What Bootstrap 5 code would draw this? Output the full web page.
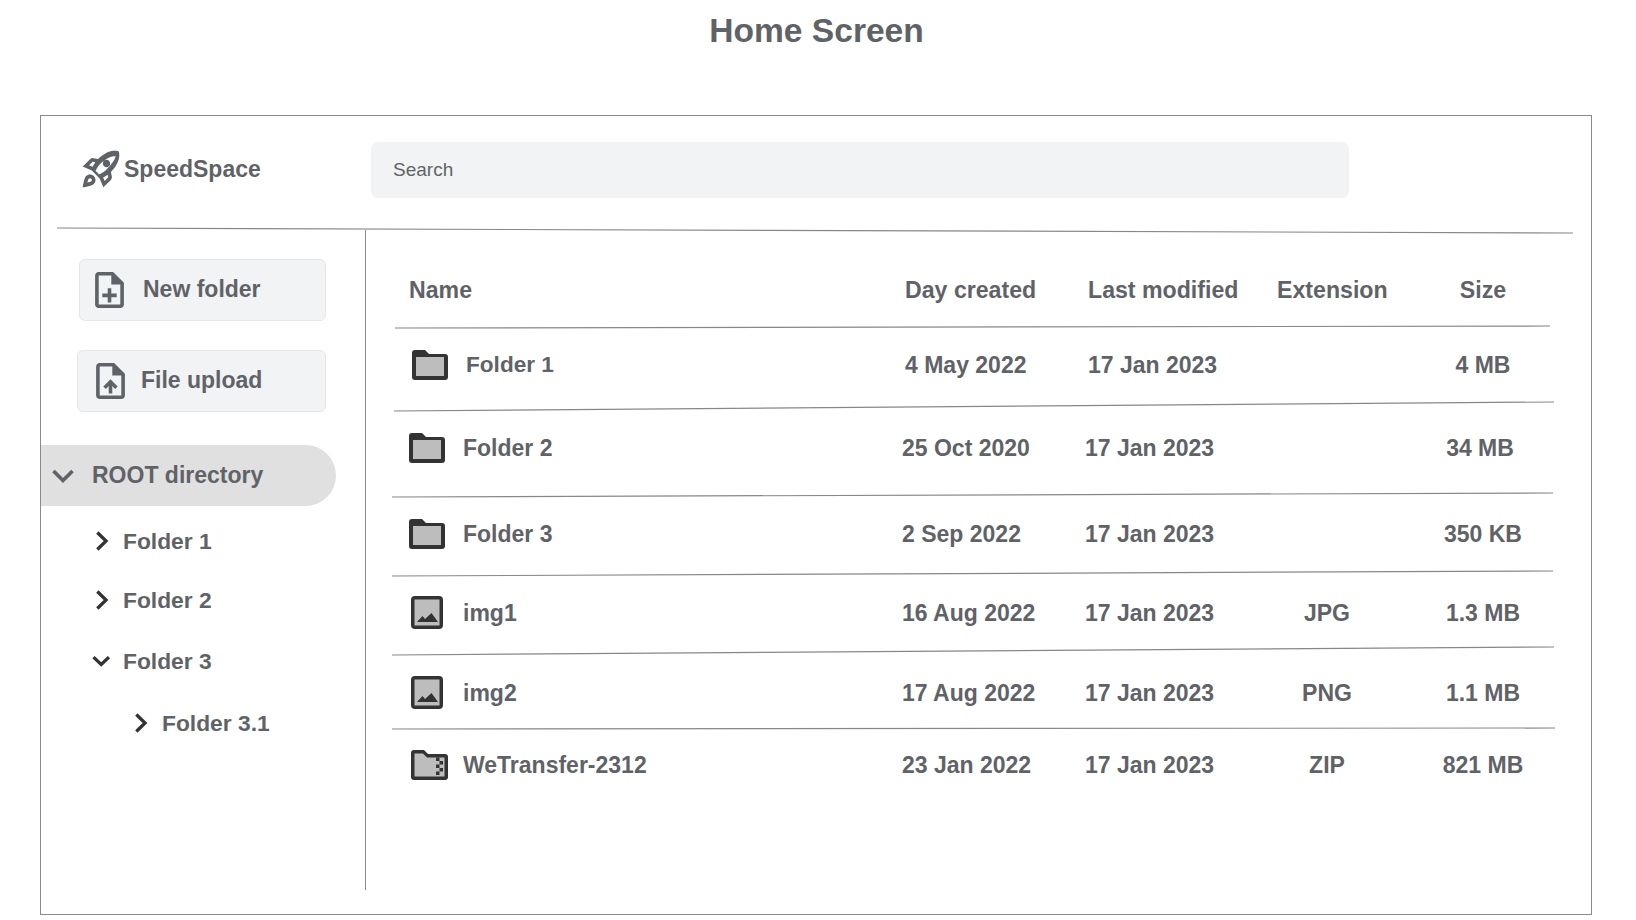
<!doctype html>
<html lang="en">
<head>
<meta charset="utf-8">
<title>Home Screen</title>
<link href="https://cdn.jsdelivr.net/npm/bootstrap@5.3.0/dist/css/bootstrap.min.css" rel="stylesheet">
<style>
body{margin:0;background:#fff;color:#5f6368;font-family:"Liberation Sans",Arial,sans-serif;font-weight:700;overflow:hidden}
svg{display:block;overflow:visible;flex:none}
.page-title{height:62px;line-height:62px;margin:0 0 53px;padding-right:3px;font-size:33.6px;font-weight:700;text-align:center;color:#5f6368}
.frame{width:1552px;height:800px;margin-left:40px;border:1px solid #8a8a8a}
.top-bar{height:110px;padding:0 0 2px 38px}
.brand{width:292px;font-size:23px;line-height:1}
.brand svg{margin:0 1px 2px 0}
.brand span{margin-bottom:2px}
.search-box{width:978px;height:56px;background:#f2f3f5;border:0;border-radius:7px;padding:0 22px;font-size:19px;font-weight:400;color:#5f6368}
.hline{stroke:#85878a;stroke-width:1.2}
.work{margin-top:-6px}
.side{width:325px;height:660px;border-right:1px solid #8a8a8a;padding-top:29px}
.act{height:62px;background:#f2f3f5;border:1px solid #e4e6e9;border-radius:6px;color:#5f6368;font-size:23px;font-weight:700;padding:0 0 2px}
.act:hover{background:#f2f3f5;color:#5f6368;border-color:#e4e6e9}
.act svg{margin-top:2px}
.act-new{width:247px;margin-left:38px;padding-left:15px;gap:19px}
.act-up{width:249px;margin-left:36px;margin-top:29px;padding-left:18px;gap:16px}
.root-row{width:295px;height:61px;margin-top:33px;margin-bottom:15px;padding-left:11px;background:#e0e0e0;border-radius:0 31px 31px 0;font-size:23px}
.root-row svg{margin-right:18px}
.tree-item{height:40px;margin-bottom:19px;padding-left:51px;font-size:22.8px}
.tree-item svg{width:31px}
.tree-second{margin-bottom:21px}
.tree-open{margin-bottom:22px}
.tree-item-deep{padding-left:90px}
.chev{fill:none;stroke:#333;stroke-width:3.4}
.chev-soft{fill:none;stroke:#5f6368;stroke-width:3.6}
.content{padding-top:40px}
.grid-row{display:grid;grid-template-columns:496px 183px 189px 104px 202px;height:40px;align-items:center;margin-left:43px;font-size:23px;white-space:nowrap}
.grid-head{font-size:23.15px}
.grid-shift{margin-left:40px}
.cell-c{text-align:center;padding-left:2px}
.cell-far{padding-left:8px}
.name-cell{display:flex;align-items:center}
.name-cell svg{margin:0 18px 0 3px}
.name-cell .pic-ic{margin-bottom:2px}
.name-narrow{font-size:22.6px}
.sep{margin-left:24px}
.ic-dark{fill:#333}
.ic-grey{fill:#bdbdbd}
.ic-file{fill:#5f6368}
</style>
</head>
<body>
<h1 class="page-title">Home Screen</h1>
<div class="frame">
  <div class="top-bar d-flex align-items-center">
    <div class="brand d-flex align-items-center">
      <svg width="44" height="44" viewBox="0 0 24 24" class="ic-file"><path d="M6,15c-0.83,0-1.58,0.34-2.12,0.88C2.7,17.06,2,22,2,22s4.94-0.7,6.12-1.88C8.66,19.58,9,18.83,9,18C9,16.34,7.66,15,6,15z M6.71,18.71c-0.28,0.28-2.17,0.76-2.17,0.76s0.47-1.88,0.76-2.17C5.47,17.11,5.72,17,6,17c0.55,0,1,0.45,1,1C7,18.28,6.89,18.53,6.71,18.71z M17.42,13.65L17.42,13.65c6.36-6.36,4.24-11.31,4.24-11.31s-4.95-2.12-11.31,4.24l-2.49-0.5C7.21,5.95,6.53,6.16,6.05,6.63L2,10.69l5,2.14L11.17,17l2.14,5l4.05-4.05c0.47-0.47,0.68-1.15,0.55-1.81L17.42,13.65z M7.41,10.83L5.5,10.01l1.97-1.97l1.44,0.29C8.34,9.16,7.83,10.03,7.41,10.83z M13.99,18.5l-0.82-1.91c0.8-0.42,1.67-0.93,2.49-1.5l0.29,1.44L13.99,18.5z M15,12.24c-1.32,1.32-3.38,2.4-4.02,2.72l-1.94-1.94c0.31-0.64,1.39-2.7,2.72-4.02c4.68-4.68,8.24-3.97,8.24-3.97S19.68,7.56,15,12.24z M15,11c1.1,0,2-0.9,2-2s-0.9-2-2-2s-2,0.9-2,2S13.9,11,15,11z"/></svg>
      <span>SpeedSpace</span>
    </div>
    <div class="search-box d-flex align-items-center">Search</div>
  </div>
  <svg width="1550" height="10"><line class="hline" x1="16" y1="2" x2="1532" y2="7"/></svg>
  <div class="work d-flex">
    <div class="side">
      <button type="button" class="btn act act-new d-flex align-items-center">
        <svg width="29" height="36" viewBox="4 2 16 20" class="ic-file"><path d="M14 2H6c-1.1 0-1.99.9-1.99 2L4 20c0 1.1.89 2 1.99 2H18c1.1 0 2-.9 2-2V8l-6-6zm4 18H6V4h7v5h5v11z"/><path d="M13.5 3.5v5h5.500V8z"/><path d="M13 11h-2v3H8v2h3v3h2v-3h3v-2h-3z"/></svg>
        New folder
      </button>
      <button type="button" class="btn act act-up d-flex align-items-center">
        <svg width="29" height="36" viewBox="4 2 16 20" class="ic-file"><path d="M14 2H6c-1.1 0-1.99.9-1.99 2L4 20c0 1.1.89 2 1.99 2H18c1.1 0 2-.9 2-2V8l-6-6zm4 18H6V4h7v5h5v11z"/><path d="M13.5 3.5v5h5.500V8z"/><path d="M8 15.01l1.41 1.41L11 14.84V19h2v-4.16l1.59 1.59L16 15.01 12.01 11z"/></svg>
        File upload
      </button>
      <div class="root-row d-flex align-items-center">
        <svg width="22" height="14" viewBox="0 0 22 14"><polyline class="chev-soft" points="1.5,2 11,11.5 20.5,2"/></svg>
        <span>ROOT directory</span>
      </div>
      <div class="tree-item d-flex align-items-center">
        <svg width="32" height="24" viewBox="0 0 32 24" preserveAspectRatio="xMinYMid"><polyline class="chev" points="5.5,3.2 14.5,12 5.5,20.8"/></svg>
        <span>Folder 1</span>
      </div>
      <div class="tree-item tree-second d-flex align-items-center">
        <svg width="32" height="24" viewBox="0 0 32 24" preserveAspectRatio="xMinYMid"><polyline class="chev" points="5.5,3.2 14.5,12 5.5,20.8"/></svg>
        <span>Folder 2</span>
      </div>
      <div class="tree-item tree-open d-flex align-items-center">
        <svg width="32" height="24" viewBox="0 0 32 24" preserveAspectRatio="xMinYMid"><polyline class="chev" points="1.5,8 9.5,15.5 17.5,8"/></svg>
        <span>Folder 3</span>
      </div>
      <div class="tree-item tree-item-deep d-flex align-items-center">
        <svg width="32" height="24" viewBox="0 0 32 24" preserveAspectRatio="xMinYMid"><polyline class="chev" points="5.5,3.2 14.5,12 5.5,20.8"/></svg>
        <span>Folder 3.1</span>
      </div>
    </div>
    <div class="content flex-grow-1">
      <div class="grid-row grid-head">
        <div>Name</div><div>Day created</div><div>Last modified</div><div>Extension</div><div class="cell-c">Size</div>
      </div>
      <svg class="sep" width="1170" height="35"><line class="hline" x1="5" y1="18" x2="1160" y2="16"/></svg>

      <div class="grid-row">
        <div class="name-cell name-narrow"><svg width="36" height="30" viewBox="0 0 36 30"><path class="ic-dark" d="M3 0h10l4 4h16a3 3 0 0 1 3 3v20a3 3 0 0 1-3 3H3a3 3 0 0 1-3-3V3a3 3 0 0 1 3-3z"/><rect class="ic-grey" x="4" y="7" width="28" height="19"/></svg>Folder 1</div>
        <div>4 May 2022</div><div>17 Jan 2023</div><div class="cell-c"></div><div class="cell-c">4 MB</div>
      </div>
      <svg class="sep" width="1170" height="43"><line class="hline" x1="4" y1="26" x2="1164" y2="17"/></svg>

      <div class="grid-row grid-shift">
        <div class="name-cell"><svg width="36" height="30" viewBox="0 0 36 30"><path class="ic-dark" d="M3 0h10l4 4h16a3 3 0 0 1 3 3v20a3 3 0 0 1-3 3H3a3 3 0 0 1-3-3V3a3 3 0 0 1 3-3z"/><rect class="ic-grey" x="4" y="7" width="28" height="19"/></svg>Folder 2</div>
        <div>25 Oct 2020</div><div>17 Jan 2023</div><div class="cell-c"></div><div class="cell-c">34 MB</div>
      </div>
      <svg class="sep" width="1170" height="46"><line class="hline" x1="2" y1="29" x2="1163" y2="25"/></svg>

      <div class="grid-row grid-shift">
        <div class="name-cell"><svg width="36" height="30" viewBox="0 0 36 30"><path class="ic-dark" d="M3 0h10l4 4h16a3 3 0 0 1 3 3v20a3 3 0 0 1-3 3H3a3 3 0 0 1-3-3V3a3 3 0 0 1 3-3z"/><rect class="ic-grey" x="4" y="7" width="28" height="19"/></svg>Folder 3</div>
        <div>2 Sep 2022</div><div>17 Jan 2023</div><div class="cell-c"></div><div class="cell-c cell-far">350 KB</div>
      </div>
      <svg class="sep" width="1170" height="39"><line class="hline" x1="2" y1="22" x2="1163" y2="17"/></svg>

      <div class="grid-row grid-shift">
        <div class="name-cell"><svg class="pic-ic" width="36" height="33" viewBox="0 0 36 33"><rect class="ic-dark" x="2" y="0" width="32" height="33" rx="4"/><rect class="ic-grey" x="5.500" y="3.500" width="25" height="26"/><path class="ic-dark" d="M8 26l5.500-6 2.500 3 6.500-6 6.500 9z"/></svg>img1</div>
        <div>16 Aug 2022</div><div>17 Jan 2023</div><div class="cell-c">JPG</div><div class="cell-c cell-far">1.3 MB</div>
      </div>
      <svg class="sep" width="1170" height="40"><line class="hline" x1="2" y1="22" x2="1164" y2="14"/></svg>

      <div class="grid-row grid-shift">
        <div class="name-cell"><svg class="pic-ic" width="36" height="33" viewBox="0 0 36 33"><rect class="ic-dark" x="2" y="0" width="32" height="33" rx="4"/><rect class="ic-grey" x="5.500" y="3.500" width="25" height="26"/><path class="ic-dark" d="M8 26l5.500-6 2.500 3 6.500-6 6.500 9z"/></svg>img2</div>
        <div>17 Aug 2022</div><div>17 Jan 2023</div><div class="cell-c">PNG</div><div class="cell-c cell-far">1.1 MB</div>
      </div>
      <svg class="sep" width="1170" height="32"><line class="hline" x1="2" y1="16" x2="1165" y2="15"/></svg>

      <div class="grid-row grid-shift">
        <div class="name-cell"><svg width="36" height="30" viewBox="0 0 36 30"><path class="ic-dark" d="M5 0h10l4 4h17a3 3 0 0 1 3 3v20a3 3 0 0 1-3 3H5a3 3 0 0 1-3-3V3a3 3 0 0 1 3-3z"/><path class="ic-grey" d="M5.500 3.500h8.500l4 4h17.500v19H5.500z"/><path class="ic-dark" d="M27 7.500h3.500v3.500H27zM30.500 11h3.500v3.500h-3.500zM27 14.500h3.500V18H27zM30.500 18h3.500v3.500h-3.500zM27 21.500h3.500V25H27z"/></svg>WeTransfer-2312</div>
        <div>23 Jan 2022</div><div>17 Jan 2023</div><div class="cell-c">ZIP</div><div class="cell-c cell-far">821 MB</div>
      </div>
    </div>
  </div>
</div>
<script src="https://cdn.jsdelivr.net/npm/bootstrap@5.3.0/dist/js/bootstrap.bundle.min.js"></script>
</body>
</html>
